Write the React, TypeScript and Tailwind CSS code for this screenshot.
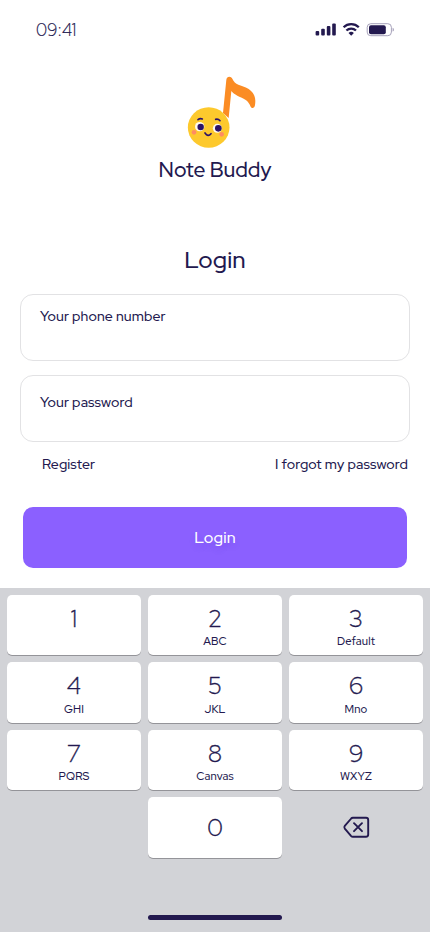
import clsx from 'clsx';

const keys = [
  { digit: '1', letters: '' },
  { digit: '2', letters: 'ABC' },
  { digit: '3', letters: 'Default' },
  { digit: '4', letters: 'GHI' },
  { digit: '5', letters: 'JKL' },
  { digit: '6', letters: 'Mno' },
  { digit: '7', letters: 'PQRS' },
  { digit: '8', letters: 'Canvas' },
  { digit: '9', letters: 'WXYZ' },
];

function StatusBar() {
  return (
    <div className="flex h-[65px] items-start justify-between px-[36px] pt-[20px]">
      <span className="text-[17px] leading-[20px] font-light tracking-[0.15px] [-webkit-text-stroke:0.2px]">09:41</span>
      <svg width="80" height="20" viewBox="0 0 80 20" fill="none">
        {/* Signal */}
        <g fill="#23194f">
          <rect x="1.6" y="11" width="3.6" height="4.5" rx="1" />
          <rect x="7.2" y="8.8" width="3.6" height="6.7" rx="1" />
          <rect x="12.8" y="6.1" width="3.6" height="9.4" rx="1" />
          <rect x="18.2" y="3.5" width="3.6" height="12" rx="1" />
        </g>
        {/* Wi-Fi */}
        <g stroke="#23194f" strokeWidth="2.3">
          <path d="M29.6 7.3a10.9 10.9 0 0 1 15.2 0" />
          <path d="M32.4 10.5a6.9 6.9 0 0 1 9.6 0" />
        </g>
        <path d="M34.5 13a3.9 3.9 0 0 1 5.4 0L37.2 15.8z" fill="#23194f" />
        {/* Battery */}
        <rect x="53.2" y="3.7" width="24.2" height="12" rx="3.6" stroke="#a6a1ba" />
        <rect x="55" y="5.2" width="16.8" height="9" rx="2" fill="#23194f" />
        <path d="M78.6 7.8v3.8c.9-.3 1.3-1 1.3-1.9s-.4-1.6-1.3-1.9z" fill="#a6a1ba" />
      </svg>
    </div>
  );
}

function Logo() {
  return (
    <svg className="ml-[15px]" width="95" height="90" viewBox="0 0 285 270" fill="none">
      <path
        d="M154 44c1-11 14-12 18-3 4 9 10 14 18 18 12 4 22 7 31 13 13 9 20 22 20 35 0 8-1 14-2 17-2 6-9 7-12 1-4-10-8-16-16-21-9-6-16-8-24-12-8-4-14-9-18-14l-8 81-17-15z"
        fill="#fb8c24"
      />
      <ellipse cx="101" cy="187.5" rx="62.5" ry="60.5" fill="#fdc92d" />
      <circle cx="57" cy="202" r="7" fill="#ff8c62" />
      <circle cx="140" cy="208" r="7" fill="#ff8c62" />
      <circle cx="74" cy="185" r="14" fill="#fffaf0" />
      <circle cx="127" cy="190" r="13.5" fill="#fffaf0" />
      <circle cx="77" cy="186" r="9.7" fill="#2c1267" />
      <circle cx="130" cy="190" r="10" fill="#2c1267" />
      <g stroke="#2c1267" strokeWidth="5" strokeLinecap="round">
        <path d="M69 164q6-5 13-2" />
        <path d="M122 163q8-2 13 4" />
        <path d="M90 204q9 13 18 2" />
      </g>
    </svg>
  );
}

function Field({ label, className }: { label: string; className?: string }) {
  return (
    <label
      className={clsx(
        'block h-[67px] rounded-[13px] border border-[#e2e2e4] bg-white pl-[19px] text-[14px] leading-[18px] font-medium tracking-[0.11px]',
        className
      )}
    >
      {label}
    </label>
  );
}

function Key({ digit, letters }: { digit: string; letters?: string }) {
  return (
    <button
      className={clsx(
        'flex h-[60.4px] flex-col items-center rounded-[5px] bg-white shadow-[0_1px_0_#949499]',
        letters === undefined ? 'pt-[17px]' : 'pt-[10px]'
      )}
    >
      <span className="text-[24px] leading-[28px] font-light [-webkit-text-stroke:0.35px]">{digit}</span>
      {letters && (
        <span className="mt-[1.3px] text-[11.2px] leading-[14px] font-medium tracking-[0.15px]">{letters}</span>
      )}
    </button>
  );
}

export default function App() {
  return (
    <div className="flex h-[932px] w-[430px] flex-col overflow-hidden bg-white font-['Red_Hat_Display','Inter',sans-serif] text-[#23194f]">
      <StatusBar />

      <div className="flex h-[523px] flex-col">
        <div className="flex flex-col items-center">
          <Logo />
          <p className="mt-px text-[21px] leading-[28px] font-medium">Note Buddy</p>
          <h1 className="mt-[61px] text-[24px] leading-[30px] font-medium tracking-[0.15px]">Login</h1>
        </div>

        <form className="mt-[19px] flex flex-col px-[20px]">
          <Field label="Your phone number" className="pt-[12px]" />
          <Field label="Your password" className="mt-[14px] pt-[17px]" />
          <div className="mt-[13px] flex justify-between pr-[2px] pl-[22px] text-[14px] leading-[18px] font-medium tracking-[0.11px]">
            <a>Register</a>
            <a>I forgot my password</a>
          </div>
          <button
            type="button"
            className="mx-[3px] mt-[34px] h-[61px] rounded-[10px] bg-[#8b60ff] text-[16px] font-medium tracking-[0.2px] text-white text-shadow-[0_4px_6px_rgb(60_20_160/0.15)]"
          >
            Login
          </button>
        </form>
      </div>

      <div className="flex flex-1 flex-col items-center bg-[#d2d3d7] px-[7px] pt-[7px] pb-[12px]">
        <div className="grid w-full grid-cols-3 gap-[7px]">
          {keys.map((key) => (
            <Key key={key.digit} {...key} />
          ))}
          <span />
          <Key digit="0" />
          <button className="flex items-center justify-center">
            <svg width="28" height="24" viewBox="0 0 28 24" fill="none" stroke="#23194f" strokeWidth="1.9" strokeLinecap="round" strokeLinejoin="round">
              <path d="M10.8 2.8H24a2.2 2.2 0 0 1 2.2 2.2v14.6a2.2 2.2 0 0 1-2.2 2.2H10.8a2.2 2.2 0 0 1-1.6-.7L2.8 13.7a2.2 2.2 0 0 1 0-2.8l6.4-7.4a2.2 2.2 0 0 1 1.6-.7z" />
              <path d="m12 8.2 8 8M20 8.2l-8 8" />
            </svg>
          </button>
        </div>
        <div className="mt-auto h-[5px] w-[134px] rounded-full bg-[#23194f]" />
      </div>
    </div>
  );
}
